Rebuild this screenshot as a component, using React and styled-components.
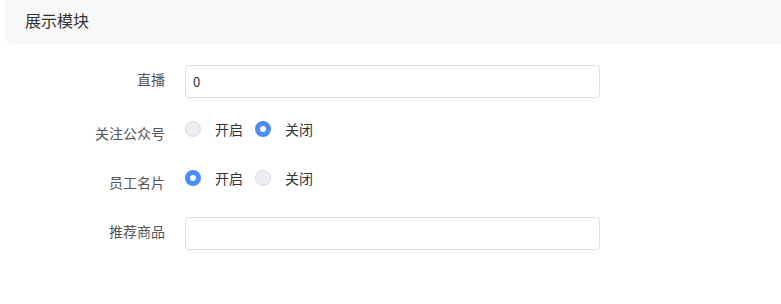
import React, { useState } from 'react';
import styled, { createGlobalStyle } from 'styled-components';

const GlobalStyle = createGlobalStyle`
  html, body {
    margin: 0;
    padding: 0;
    background: #fff;
    font-family: "Noto Sans CJK SC", "Noto Sans", "Liberation Sans", sans-serif;
  }
`;

const Page = styled.div`
  width: 781px;
  height: 304px;
  overflow: hidden;
`;

const Header = styled.div`
  margin-left: 5px;
  height: 44px;
  box-sizing: border-box;
  display: flex;
  align-items: center;
  padding: 0 0 4px 20px;
  background-color: #f8f8f8;
  border-bottom-left-radius: 6px;
  font-size: 16px;
  color: #333;
`;

const Form = styled.form`
  display: flex;
  flex-direction: column;
  gap: 21px;
  padding-top: 21px;
`;

const Row = styled.div`
  display: flex;
  align-items: flex-start;
`;

const Label = styled.label`
  width: 185px;
  flex-shrink: 0;
  padding-right: 20px;
  box-sizing: border-box;
  text-align: right;
  font-size: 14px;
  line-height: 28px;
  color: #555;
`;

const Input = styled.input`
  width: 415px;
  height: 33px;
  box-sizing: border-box;
  padding: 0 7px;
  border: 1px solid #dcdfe6;
  border-radius: 4px;
  font-size: 13px;
  color: #333;
  font-family: inherit;
  outline: none;
`;

const RadioGroup = styled.div`
  display: flex;
  align-items: center;
  height: 20px;
`;

const RadioItem = styled.label`
  display: flex;
  align-items: center;
  margin-right: 12px;
  cursor: pointer;
  font-size: 14px;
  color: #333;
`;

const Dot = styled.span`
  width: 16px;
  height: 16px;
  box-sizing: border-box;
  border-radius: 50%;
  margin-right: 14px;
  border: ${p => (p.$on ? '5px solid #4a8cf7' : '1px solid #d8dce5')};
  background: ${p => (p.$on ? '#fff' : '#edeef2')};
`;

const Radios = ({ value, onChange }) => (
  <RadioGroup>
    {['开启', '关闭'].map(t => (
      <RadioItem key={t} onClick={() => onChange(t)}>
        <Dot $on={value === t} />
        {t}
      </RadioItem>
    ))}
  </RadioGroup>
);

const App = () => {
  const [live, setLive] = useState('0');
  const [follow, setFollow] = useState('关闭');
  const [card, setCard] = useState('开启');
  const [goods, setGoods] = useState('');

  return (
    <Page>
      <GlobalStyle />
      <Header>展示模块</Header>
      <Form onSubmit={e => e.preventDefault()}>
        <Row>
          <Label>直播</Label>
          <Input value={live} onChange={e => setLive(e.target.value)} />
        </Row>
        <Row>
          <Label>关注公众号</Label>
          <Radios value={follow} onChange={setFollow} />
        </Row>
        <Row>
          <Label>员工名片</Label>
          <Radios value={card} onChange={setCard} />
        </Row>
        <Row>
          <Label>推荐商品</Label>
          <Input value={goods} onChange={e => setGoods(e.target.value)} />
        </Row>
      </Form>
    </Page>
  );
};

export default App;
